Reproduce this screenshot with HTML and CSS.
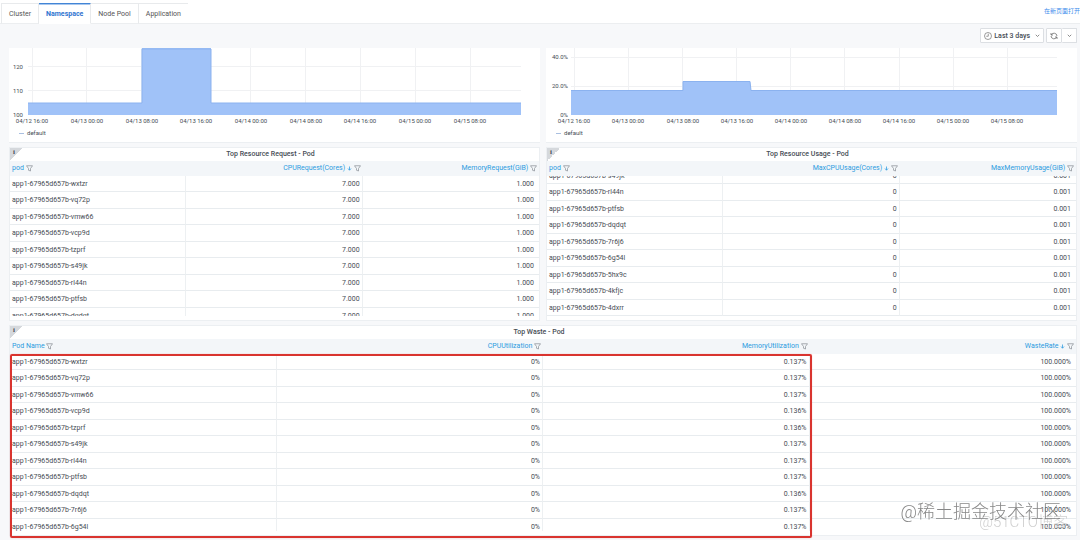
FILE: index.html
```html
<!DOCTYPE html>
<html lang="zh-CN">
<head>
  <meta charset="UTF-8">
  <meta name="viewport" content="width=device-width, initial-scale=1.0">
  <title>Namespace</title>
  <link rel="stylesheet" href="styles.css">
</head>
<body>
  <svg class="symbols" aria-hidden="true">
    <symbol id="filter" viewBox="0 0 14 14">
      <path d="M1 1.500h12L9 7v5L5 10.500V7z" fill="none" stroke="#8d9399" stroke-width="1.500" stroke-linejoin="round"/>
    </symbol>
    <symbol id="down" viewBox="0 0 10 10">
      <path d="M5 1v7M2 5l3 3.500L8 5" fill="none" stroke="currentColor" stroke-width="1.500"/>
    </symbol>
    <symbol id="chevron" viewBox="0 0 10 10">
      <path d="M1.500 3.500L5 7l3.500-3.500" fill="none" stroke="#666" stroke-width="1.500"/>
    </symbol>
  </svg>

  <header class="topbar">
    <nav class="tabs">
      <a class="tab" href="#cluster">Cluster</a>
      <a class="tab active" href="#namespace">Namespace</a>
      <a class="tab" href="#nodepool">Node Pool</a>
      <a class="tab" href="#application">Application</a>
    </nav>
    <a class="open-link" href="#open">在新页面打开</a>
  </header>

  <main class="page">
    <div class="toolbar">
      <button class="tool-btn range" type="button">
        <svg class="icon-lg" viewBox="0 0 16 16" fill="none" stroke="#666" stroke-width="1.300"><circle cx="8" cy="8" r="7"/><path d="M8.500 3.500V8.500H4.500"/></svg>
        <span>Last 3 days</span>
        <svg class="icon-sm range-arrow"><use href="#chevron"/></svg>
      </button>
      <div class="tool-group">
        <button class="tool-btn" type="button" aria-label="Refresh">
          <svg class="icon-lg" viewBox="0 0 16 16" fill="none" stroke="#666" stroke-width="1.500"><path d="M2 2v4h4M2.500 6A6 6 0 0 1 14 8M14 14v-4h-4M13.500 10A6 6 0 0 1 2 8"/></svg>
        </button>
        <button class="tool-btn" type="button" aria-label="Refresh interval">
          <svg class="icon-sm"><use href="#chevron"/></svg>
        </button>
      </div>
    </div>

    <div class="grid">
      <section class="panel chart-panel">
        <svg class="chart" viewBox="0 0 531 78">
          <path class="gridline" d="M23.500 0V67M77.500 0V67M132.500 0V67M187.500 0V67M241.500 0V67M296.500 0V67M351.500 0V67M406.500 0V67M461.500 0V67M19 18.500H512M19 42.500H512"/>
          <path class="area" d="M19 67V55H133V0H202V55H512V67z"/>
          <path class="area-line" d="M19 55H133V1H202V55H512"/>
          <g class="axis-y">
            <text x="14" y="21">120</text>
            <text x="14" y="45">110</text>
            <text x="14" y="69">100</text>
          </g>
          <g class="axis-x">
            <text x="23" y="75">04/12 16:00</text>
            <text x="78" y="75">04/13 00:00</text>
            <text x="133" y="75">04/13 08:00</text>
            <text x="187" y="75">04/13 16:00</text>
            <text x="242" y="75">04/14 00:00</text>
            <text x="297" y="75">04/14 08:00</text>
            <text x="351" y="75">04/14 16:00</text>
            <text x="406" y="75">04/15 00:00</text>
            <text x="461" y="75">04/15 08:00</text>
          </g>
        </svg>
        <div class="legend">default</div>
      </section>

      <section class="panel chart-panel">
        <svg class="chart" viewBox="0 0 531 78">
          <path class="gridline" d="M28.500 0V67M82.500 0V67M136.500 0V67M190.500 0V67M244.500 0V67M298.500 0V67M353.500 0V67M407.500 0V67M461.500 0V67M25 9.500H511M25 38.500H511"/>
          <path class="area" d="M25 67V42H137V33H204L205 42H511V67z"/>
          <path class="area-line" d="M25 42.500H137V33.500H204L205 42.500H511"/>
          <g class="axis-y">
            <text x="22" y="11">40.0%</text>
            <text x="22" y="40">20.0%</text>
            <text x="22" y="69">0%</text>
          </g>
          <g class="axis-x">
            <text x="28" y="75">04/12 16:00</text>
            <text x="82" y="75">04/13 00:00</text>
            <text x="137" y="75">04/13 08:00</text>
            <text x="191" y="75">04/13 16:00</text>
            <text x="245" y="75">04/14 00:00</text>
            <text x="299" y="75">04/14 08:00</text>
            <text x="353" y="75">04/14 16:00</text>
            <text x="407" y="75">04/15 00:00</text>
            <text x="461" y="75">04/15 08:00</text>
          </g>
        </svg>
        <div class="legend">default</div>
      </section>

      <section class="panel">
        <span class="info">i</span>
        <h2 class="panel-title">Top Resource Request - Pod</h2>
        <div class="scroll">
          <table>
            <thead>
              <tr>
                <th>pod <svg class="icon-md"><use href="#filter"/></svg></th>
                <th>CPURequest(Cores) <svg class="icon-sm"><use href="#down"/></svg> <svg class="icon-md"><use href="#filter"/></svg></th>
                <th>MemoryRequest(GiB) <svg class="icon-md"><use href="#filter"/></svg></th>
              </tr>
            </thead>
            <tbody>
              <tr><td>app1-67965d657b-wxtzr</td><td>7.000</td><td>1.000</td></tr>
              <tr><td>app1-67965d657b-vq72p</td><td>7.000</td><td>1.000</td></tr>
              <tr><td>app1-67965d657b-vmw66</td><td>7.000</td><td>1.000</td></tr>
              <tr><td>app1-67965d657b-vcp9d</td><td>7.000</td><td>1.000</td></tr>
              <tr><td>app1-67965d657b-tzprf</td><td>7.000</td><td>1.000</td></tr>
              <tr><td>app1-67965d657b-s49jk</td><td>7.000</td><td>1.000</td></tr>
              <tr><td>app1-67965d657b-rl44n</td><td>7.000</td><td>1.000</td></tr>
              <tr><td>app1-67965d657b-ptfsb</td><td>7.000</td><td>1.000</td></tr>
              <tr><td>app1-67965d657b-dqdqt</td><td>7.000</td><td>1.000</td></tr>
            </tbody>
          </table>
        </div>
      </section>

      <section class="panel">
        <span class="info">i</span>
        <h2 class="panel-title">Top Resource Usage - Pod</h2>
        <div class="scroll" id="usage">
          <table>
            <thead>
              <tr>
                <th>pod <svg class="icon-md"><use href="#filter"/></svg></th>
                <th>MaxCPUUsage(Cores) <svg class="icon-sm"><use href="#down"/></svg> <svg class="icon-md"><use href="#filter"/></svg></th>
                <th>MaxMemoryUsage(GiB) <svg class="icon-md"><use href="#filter"/></svg></th>
              </tr>
            </thead>
            <tbody>
              <tr><td>app1-67965d657b-s49jk</td><td>0</td><td>0.001</td></tr>
              <tr><td>app1-67965d657b-rl44n</td><td>0</td><td>0.001</td></tr>
              <tr><td>app1-67965d657b-ptfsb</td><td>0</td><td>0.001</td></tr>
              <tr><td>app1-67965d657b-dqdqt</td><td>0</td><td>0.001</td></tr>
              <tr><td>app1-67965d657b-7r6j6</td><td>0</td><td>0.001</td></tr>
              <tr><td>app1-67965d657b-6g54l</td><td>0</td><td>0.001</td></tr>
              <tr><td>app1-67965d657b-5hx9c</td><td>0</td><td>0.001</td></tr>
              <tr><td>app1-67965d657b-4kfjc</td><td>0</td><td>0.001</td></tr>
              <tr><td>app1-67965d657b-4dxrr</td><td>0</td><td>0.001</td></tr>
            </tbody>
          </table>
        </div>
      </section>

      <section class="panel wide">
        <span class="info">i</span>
        <h2 class="panel-title">Top Waste - Pod</h2>
        <div class="scroll tall">
          <table>
            <thead>
              <tr>
                <th>Pod Name <svg class="icon-md"><use href="#filter"/></svg></th>
                <th>CPUUtilization <svg class="icon-md"><use href="#filter"/></svg></th>
                <th>MemoryUtilization <svg class="icon-md"><use href="#filter"/></svg></th>
                <th>WasteRate <svg class="icon-sm"><use href="#down"/></svg> <svg class="icon-md"><use href="#filter"/></svg></th>
              </tr>
            </thead>
            <tbody>
              <tr><td>app1-67965d657b-wxtzr</td><td>0%</td><td>0.137%</td><td>100.000%</td></tr>
              <tr><td>app1-67965d657b-vq72p</td><td>0%</td><td>0.137%</td><td>100.000%</td></tr>
              <tr><td>app1-67965d657b-vmw66</td><td>0%</td><td>0.137%</td><td>100.000%</td></tr>
              <tr><td>app1-67965d657b-vcp9d</td><td>0%</td><td>0.136%</td><td>100.000%</td></tr>
              <tr><td>app1-67965d657b-tzprf</td><td>0%</td><td>0.136%</td><td>100.000%</td></tr>
              <tr><td>app1-67965d657b-s49jk</td><td>0%</td><td>0.137%</td><td>100.000%</td></tr>
              <tr><td>app1-67965d657b-rl44n</td><td>0%</td><td>0.137%</td><td>100.000%</td></tr>
              <tr><td>app1-67965d657b-ptfsb</td><td>0%</td><td>0.137%</td><td>100.000%</td></tr>
              <tr><td>app1-67965d657b-dqdqt</td><td>0%</td><td>0.136%</td><td>100.000%</td></tr>
              <tr><td>app1-67965d657b-7r6j6</td><td>0%</td><td>0.137%</td><td>100.000%</td></tr>
              <tr><td>app1-67965d657b-6g54l</td><td>0%</td><td>0.137%</td><td>100.000%</td></tr>
            </tbody>
          </table>
        </div>
        <div class="highlight"></div>
        <div class="mark mark-small">@51CTO博客</div>
        <div class="mark">@稀土掘金技术社区</div>
      </section>
    </div>
  </main>

  <script src="main.js"></script>
</body>
</html>
```
FILE: styles.css
```css
* {
  box-sizing: border-box;
}
body {
  margin: 0;
  font-family: Roboto, "Noto Sans CJK SC", sans-serif;
  font-size: 7px;
  line-height: 10px;
  color: #464c54;
  background-color: #f7f8fa;
}
a {
  text-decoration: none;
}
.symbols {
  display: none;
}
.icon-lg {
  width: 8px;
  height: 8px;
}
.icon-md {
  width: 7px;
  height: 7px;
  vertical-align: middle;
}
.icon-sm {
  width: 5px;
  height: 5px;
  vertical-align: middle;
}

/* top bar */
.topbar {
  display: flex;
  justify-content: space-between;
  align-items: flex-start;
  height: 24px;
  padding: 3px 0 0 1px;
  background-color: #fff;
  border-bottom: 1px solid #eceef0;
}
.tabs {
  display: flex;
}
.tab {
  height: 21px;
  padding: 5px 7px 0;
  color: #555;
  border-top: 1px solid #e8eaec;
  border-right: 1px solid #e8eaec;
  border-bottom: 1px solid #eceef0;
}
.tab:first-child {
  border-left: 1px solid #e8eaec;
}
.tab:last-child {
  border-right: none;
}
.tab.active {
  color: #2f74d0;
  font-weight: bold;
  border-top-color: #4285d6;
  border-bottom-color: #fff;
  box-shadow: inset 0 1px 0 #a9c8ee;
}
.open-link {
  padding-top: 3px;
  font-size: 6px;
  color: #3c8cec;
}

/* toolbar */
.page {
  padding: 0 3px 3px 9px;
}
.toolbar {
  display: flex;
  justify-content: flex-end;
  gap: 2px;
  height: 24px;
  padding: 4px 0 5px;
}
.tool-group {
  display: flex;
}
.tool-btn {
  display: flex;
  align-items: center;
  justify-content: center;
  width: 16px;
  padding: 0;
  font-family: inherit;
  font-size: 7px;
  font-weight: 500;
  color: #464c54;
  background-color: #fff;
  border: 1px solid #dcdfe3;
  border-radius: 1px;
}
.tool-btn + .tool-btn {
  width: 15px;
  border-left: none;
}
.tool-btn.range {
  width: auto;
  gap: 2px;
  padding: 0 3px;
}
.range-arrow {
  margin-left: 3px;
}

/* panels */
.grid {
  display: grid;
  grid-template-columns: 1fr 1fr;
  gap: 4px 6px;
}
.panel {
  position: relative;
  min-width: 0;
  padding-bottom: 4px;
  background-color: #fff;
  border: 1px solid #eceff2;
}
.wide {
  grid-column: 1 / 3;
}
.chart-panel {
  border-width: 0 0 1px;
}
.chart {
  display: block;
  width: 100%;
}
.gridline {
  fill: none;
  stroke: #f0f1f3;
}
.area {
  fill: #a0c2f8;
}
.area-line {
  fill: none;
  stroke: #8bb2ef;
}
.chart text {
  font-size: 6px;
  fill: #464c54;
}
.axis-x {
  text-anchor: middle;
}
.axis-y {
  text-anchor: end;
}
.legend {
  display: flex;
  align-items: center;
  gap: 3px;
  padding: 2px 10px 0;
  font-size: 6px;
}
.legend::before {
  content: "";
  width: 5px;
  height: 1px;
  background-color: #a9bfe0;
}
.info {
  position: absolute;
  top: 0;
  left: 0;
  width: 13px;
  height: 13px;
  padding-left: 3px;
  font-family: "Liberation Serif", serif;
  font-weight: bold;
  line-height: 8px;
  background: linear-gradient(135deg, #d5d8dc 50%, transparent 50%);
}
.panel-title {
  margin: 0;
  padding: 1px 8px 2px 0;
  font-size: 7px;
  font-weight: 500;
  line-height: 10px;
  text-align: center;
}

/* tables */
.scroll {
  height: 155px;
  overflow: auto;
  scrollbar-width: none;
}
.scroll.tall {
  height: 192px;
}
table {
  width: 100%;
  table-layout: fixed;
  border-collapse: separate;
  border-spacing: 0;
}
th, td {
  padding: 0 2px;
  text-align: right;
  white-space: nowrap;
}
th:first-child, td:first-child {
  text-align: left;
}
th {
  position: sticky;
  top: 0;
  height: 15px;
  padding-bottom: 1px;
  font-weight: normal;
  color: #2b9be0;
  background-color: #f3f6f9;
}
td {
  height: 16px;
  border-right: 1px solid #edf0f2;
  border-bottom: 1px solid #e8ecef;
}
tr:nth-child(even) td {
  height: 17px;
}
td:last-child {
  padding-right: 5px;
  border-right: none;
}

.highlight {
  position: absolute;
  top: 28px;
  bottom: -3px;
  left: 0;
  width: calc(75% + 2px);
  border: 2px solid #d9342f;
  border-radius: 2px;
  box-shadow: 0 0 1px #e88;
}
.mark {
  position: absolute;
  right: 15px;
  bottom: 11px;
  font-size: 18px;
  font-weight: 300;
  line-height: 24px;
  color: rgba(105, 105, 105, 0.8);
  text-shadow: -1px -1px 0 rgba(255, 255, 255, 0.8);
}
.mark-small {
  right: 8px;
  bottom: 1px;
  font-size: 15px;
  color: rgba(160, 160, 160, 0.5);
}
```
FILE: main.js
```js
// usage table opens part way down its first row
document.getElementById('usage').scrollTop = 8;
```
